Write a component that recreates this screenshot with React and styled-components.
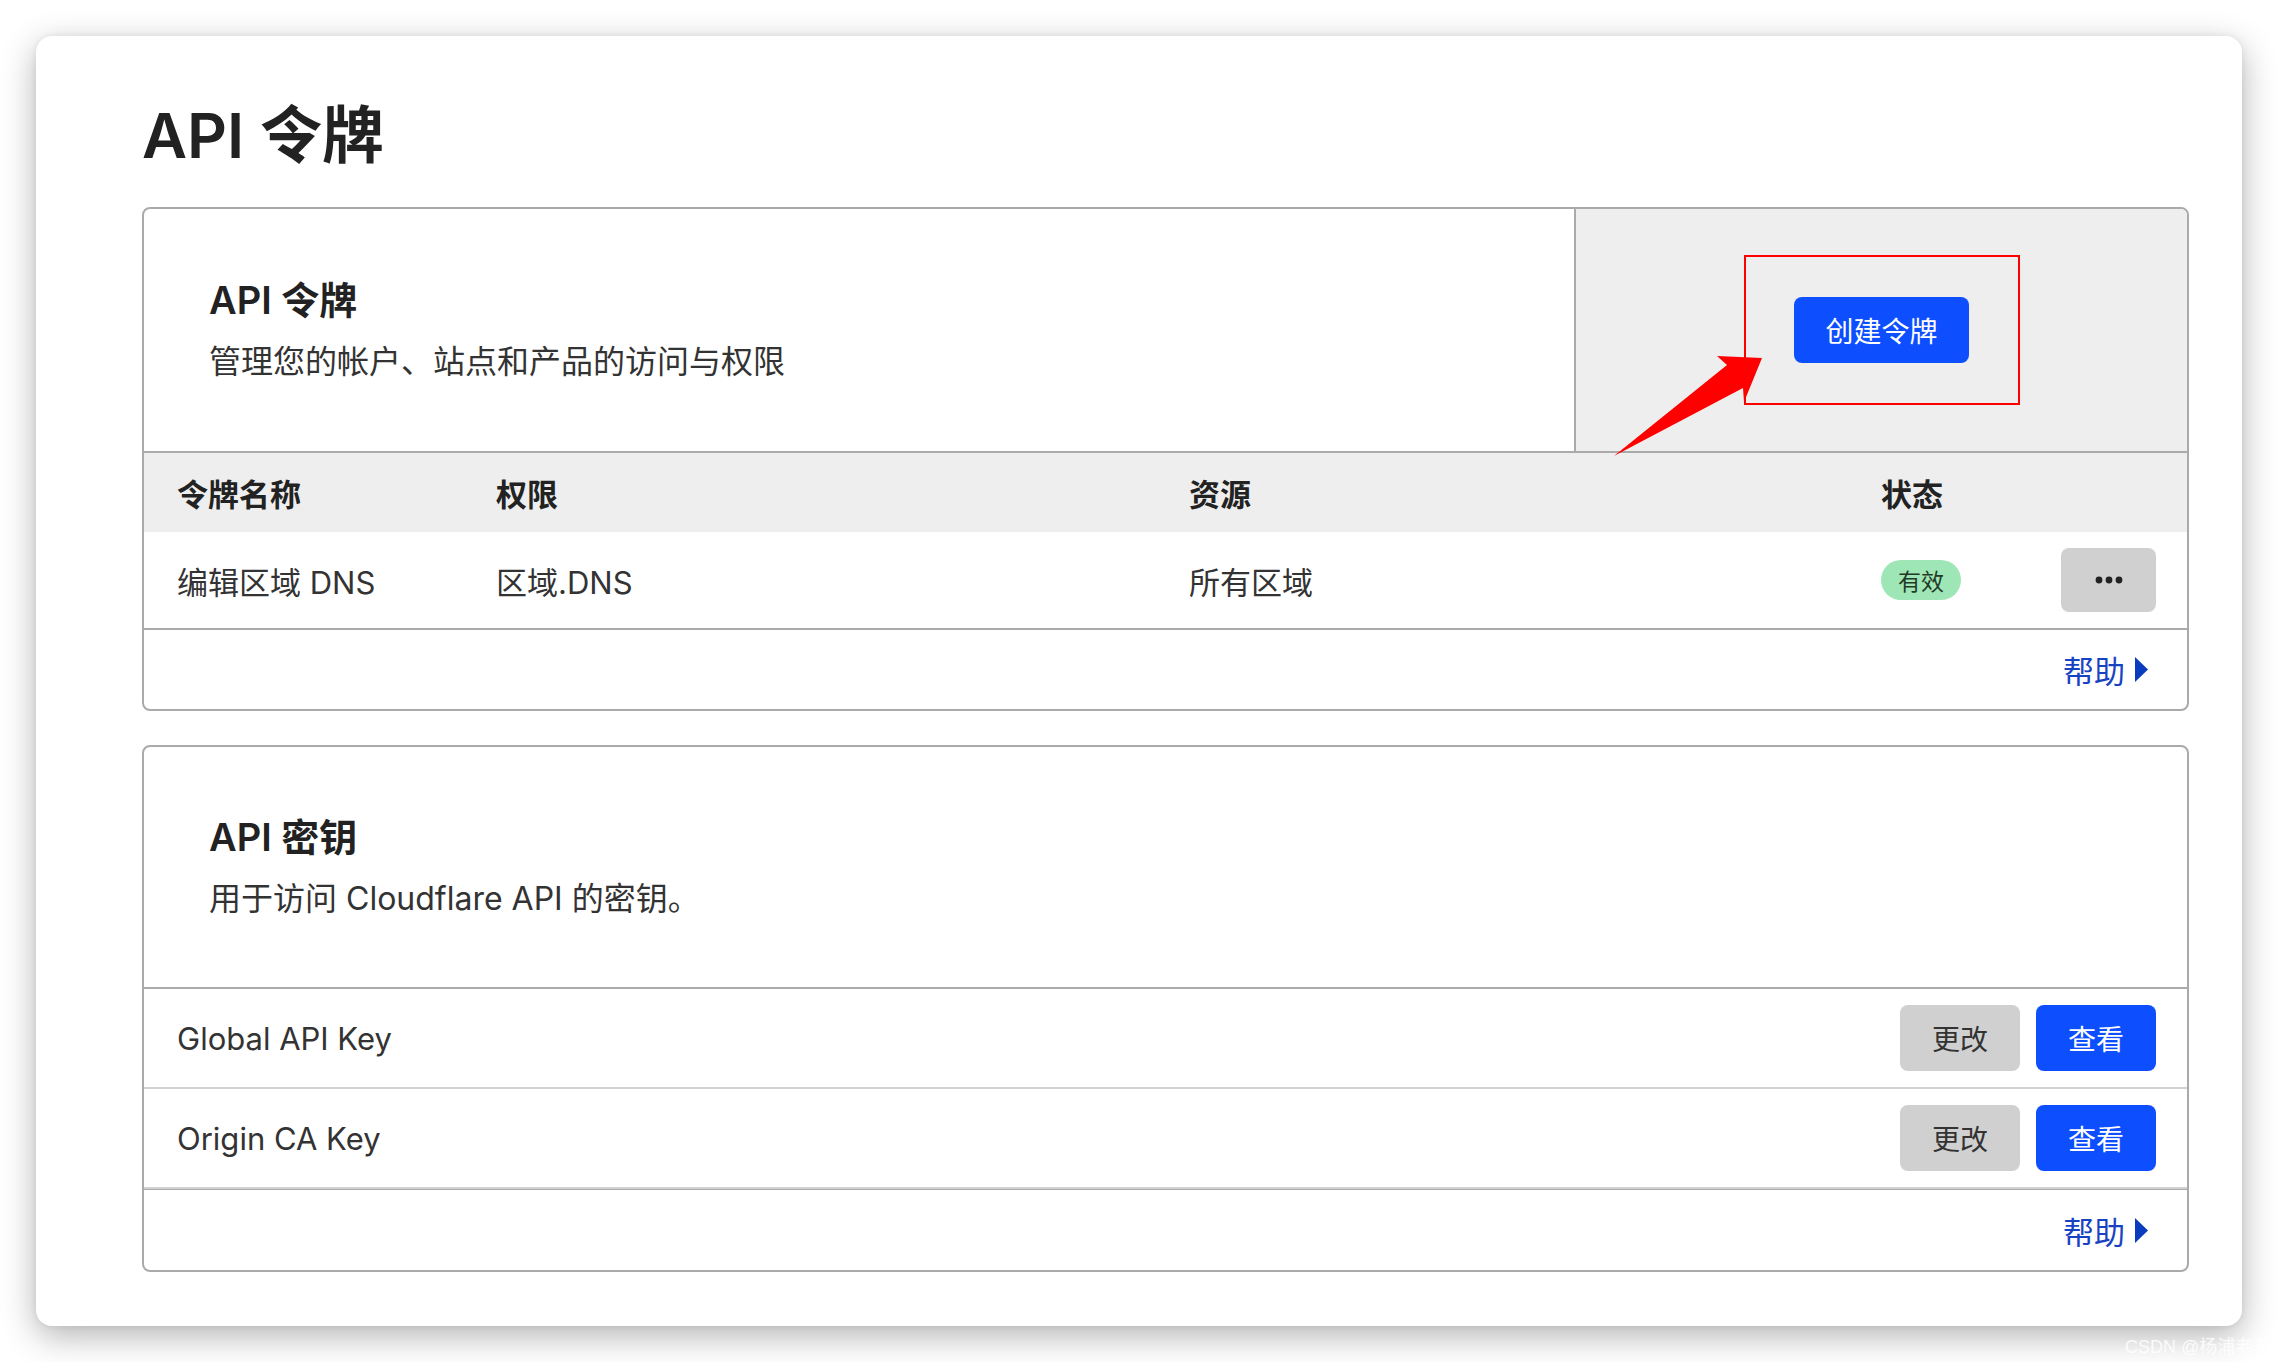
import React from "react";
import styled, { createGlobalStyle } from "styled-components";

const GlobalStyle = createGlobalStyle`
  html, body {
    margin: 0;
    padding: 0;
    background: #ffffff;
  }
  body {
    font-family: "Inter", "Noto Sans CJK SC", sans-serif;
    color: #333;
  }
`;

const Page = styled.div`
  position: relative;
  width: 2278px;
  height: 1362px;
  box-sizing: border-box;
  padding: 36px;
  overflow: hidden;
`;

const Window = styled.div`
  width: 2206px;
  box-sizing: border-box;
  padding: 64px 53px 54px 106px;
  background: #fff;
  border-radius: 16px;
  box-shadow: 0 10px 34px rgba(0, 0, 0, 0.3), 0 0 6px rgba(0, 0, 0, 0.07);
`;

const PageTitle = styled.h1`
  margin: 0 0 35px;
  font-size: 62px;
  line-height: 72px;
  font-weight: 600;
  color: #222;
`;

const Panel = styled.section`
  border: 2px solid #aaa;
  border-radius: 8px;
  overflow: hidden;
  background: #fff;
  & + & {
    margin-top: 34px;
  }
`;

const PanelHeader = styled.div`
  display: flex;
  height: ${(p) => p.$height}px;
  border-bottom: 2px solid #aaa;
`;

const Intro = styled.div`
  flex: 1;
  display: flex;
  flex-direction: column;
  justify-content: center;
  padding-left: 65px;
`;

const IntroTitle = styled.h2`
  margin: 0;
  font-size: 38px;
  line-height: 46px;
  font-weight: 600;
  color: #222;
`;

const IntroText = styled.p`
  margin: 17px 0 0;
  font-size: 32px;
  line-height: 44px;
  color: #333;
`;

const ActionSide = styled.div`
  width: 611px;
  border-left: 2px solid #aaa;
  background: #eee;
  display: flex;
  align-items: center;
  justify-content: center;
`;

const Highlight = styled.div`
  width: 276px;
  height: 150px;
  box-sizing: border-box;
  border: 2px solid #ff0000;
  display: flex;
  align-items: center;
  justify-content: center;
`;

const Button = styled.button`
  height: 66px;
  width: ${(p) => p.$width || 120}px;
  border: none;
  border-radius: 8px;
  font-family: inherit;
  font-size: 28px;
  padding: 0;
  cursor: pointer;
  background: ${(p) => (p.$primary ? "#0d4eff" : "#d0d0d0")};
  color: ${(p) => (p.$primary ? "#fff" : "#333")};
`;

const TableRow = styled.div`
  display: grid;
  grid-template-columns: 319px 693px 692px 1fr auto;
  align-items: center;
  padding: 0 31px 0 33px;
  height: ${(p) => (p.$head ? 79 : 96)}px;
  background: ${(p) => (p.$head ? "#eee" : "#fff")};
  border-bottom: ${(p) => (p.$head ? "none" : "2px solid #aaa")};
  font-size: 31px;
  font-weight: ${(p) => (p.$head ? 600 : 400)};
  color: ${(p) => (p.$head ? "#222" : "#333")};
`;

const Badge = styled.span`
  justify-self: start;
  width: 80px;
  height: 40px;
  border-radius: 20px;
  background: #9fe6b6;
  color: #1f3a25;
  font-size: 23px;
  display: flex;
  align-items: center;
  justify-content: center;
`;

const MoreButton = styled.button`
  width: 95px;
  height: 64px;
  border: none;
  border-radius: 8px;
  background: #d0d0d0;
  display: flex;
  align-items: center;
  justify-content: center;
  padding: 0;
  cursor: pointer;
`;

const PanelFooter = styled.div`
  display: flex;
  align-items: center;
  justify-content: flex-end;
  height: ${(p) => p.$height}px;
  padding-right: 39px;
  border-top: ${(p) => (p.$line ? "1px solid #aaa" : "none")};
`;

const HelpLink = styled.a`
  display: flex;
  align-items: center;
  gap: 10px;
  font-size: 31px;
  color: #1743c2;
  text-decoration: none;
  cursor: pointer;
`;

const KeyRow = styled.div`
  display: flex;
  align-items: center;
  justify-content: space-between;
  height: 98px;
  padding: 0 31px 0 33px;
  border-bottom: 2px solid #d2d2d2;
  font-size: 31px;
  color: #333;
`;

const ButtonGroup = styled.div`
  display: flex;
  gap: 16px;
`;

const Arrow = styled.svg`
  position: absolute;
  left: 0;
  top: 0;
  pointer-events: none;
`;

const Watermark = styled.span`
  position: absolute;
  left: 2125px;
  top: 1332px;
  font-family: "Liberation Sans", "Noto Sans CJK SC", sans-serif;
  font-size: 18px;
  color: rgba(255, 255, 255, 0.85);
  white-space: nowrap;
`;

const Dots = () => (
  <svg width="32" height="8" viewBox="0 0 32 8">
    <circle cx="6" cy="4" r="3.4" fill="#222" />
    <circle cx="16" cy="4" r="3.4" fill="#222" />
    <circle cx="26" cy="4" r="3.4" fill="#222" />
  </svg>
);

const Help = () => (
  <HelpLink>
    帮助
    <svg width="13" height="25" viewBox="0 0 13 25">
      <path d="M0 0 L13 12.5 L0 25 Z" fill="#0a3cc0" />
    </svg>
  </HelpLink>
);

const keys = ["Global API Key", "Origin CA Key"];

export default function App() {
  return (
    <Page>
      <GlobalStyle />
      <Window>
        <PageTitle>API 令牌</PageTitle>

        <Panel>
          <PanelHeader $height={242}>
            <Intro>
              <IntroTitle>API 令牌</IntroTitle>
              <IntroText>管理您的帐户、站点和产品的访问与权限</IntroText>
            </Intro>
            <ActionSide>
              <Highlight>
                <Button $primary $width={175}>
                  创建令牌
                </Button>
              </Highlight>
            </ActionSide>
          </PanelHeader>
          <TableRow $head>
            <span>令牌名称</span>
            <span>权限</span>
            <span>资源</span>
            <span>状态</span>
            <span />
          </TableRow>
          <TableRow>
            <span>编辑区域 DNS</span>
            <span>区域.DNS</span>
            <span>所有区域</span>
            <Badge>有效</Badge>
            <MoreButton>
              <Dots />
            </MoreButton>
          </TableRow>
          <PanelFooter $height={79}>
            <Help />
          </PanelFooter>
        </Panel>

        <Panel>
          <PanelHeader $height={240}>
            <Intro>
              <IntroTitle>API 密钥</IntroTitle>
              <IntroText>用于访问 Cloudflare API 的密钥。</IntroText>
            </Intro>
          </PanelHeader>
          {keys.map((k) => (
            <KeyRow key={k}>
              <span>{k}</span>
              <ButtonGroup>
                <Button>更改</Button>
                <Button $primary>查看</Button>
              </ButtonGroup>
            </KeyRow>
          ))}
          <PanelFooter $height={80} $line>
            <Help />
          </PanelFooter>
        </Panel>
      </Window>

      <Arrow width="2278" height="1362" viewBox="0 0 2278 1362">
        <polygon
          points="1614,456 1727,365 1717,356 1762,358 1744,402 1743,388"
          fill="#ff0000"
        />
      </Arrow>
      <Watermark>CSDN @杨浦老苏</Watermark>
    </Page>
  );
}
